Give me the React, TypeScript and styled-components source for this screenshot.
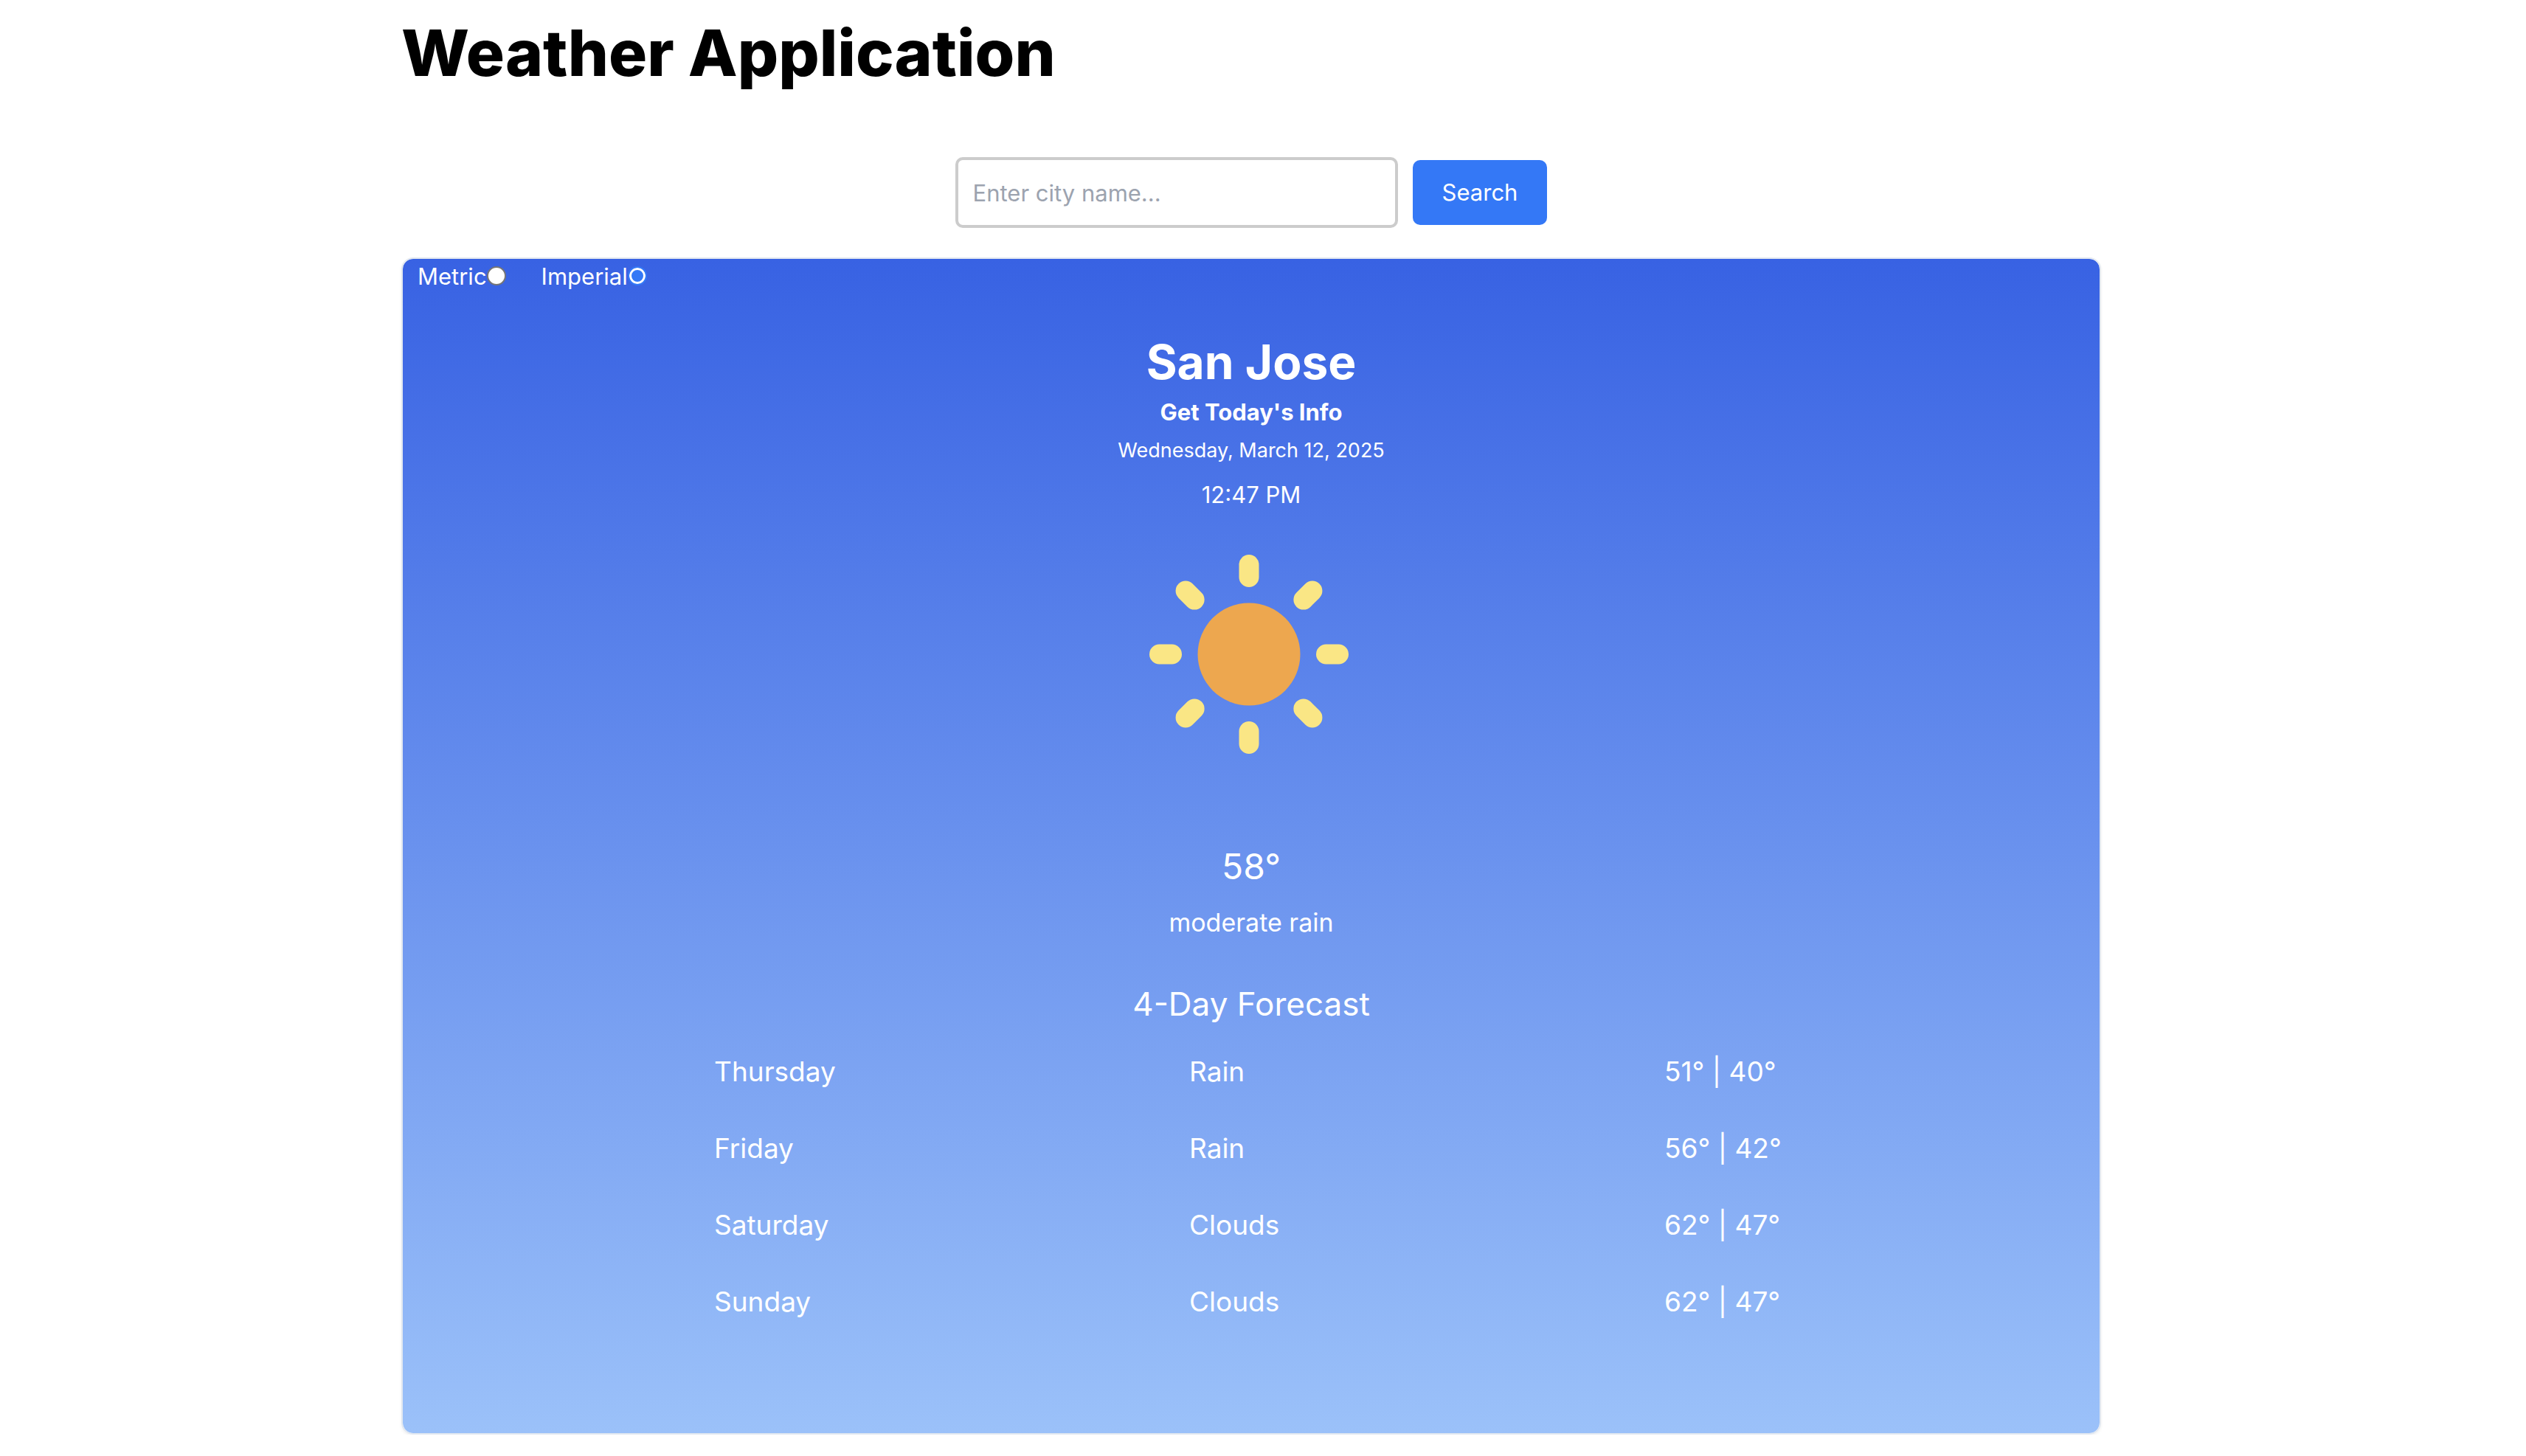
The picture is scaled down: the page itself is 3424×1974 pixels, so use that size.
import React, { useState } from 'react';
import styled, { createGlobalStyle } from 'styled-components';

const GlobalStyle = createGlobalStyle`
  *, *::before, *::after { box-sizing: border-box; }
  body {
    margin: 0;
    padding-right: 32px;
    background: #fff;
    color: #000;
    font-family: Inter, "Liberation Sans", sans-serif;
    font-size: 31px;
    line-height: 48px;
  }
  h1, h2, h3, p { margin: 0; }
`;

const Page = styled.main`
  max-width: 2304px;
  margin: 0 auto;
  padding-top: 24px;
`;

const Title = styled.h1`
  font-size: 87px;
  line-height: 96px;
  font-weight: 800;
`;

const SearchForm = styled.form`
  display: flex;
  justify-content: center;
  align-items: center;
  gap: 20px;
  margin: 93px 0 40px;
`;

const CityInput = styled.input`
  width: 600px;
  height: 96px;
  padding: 0 20px;
  border: 4px solid #ccc;
  border-radius: 10px;
  background: #fff;
  color: #000;
  font: inherit;

  &::placeholder {
    color: #9ca3af;
    opacity: 1;
  }
`;

const SearchButton = styled.button`
  height: 88px;
  padding: 0 40px;
  border: 0;
  border-radius: 10px;
  background: #3478f6;
  color: #fff;
  font: inherit;
  cursor: pointer;
`;

const Card = styled.section`
  padding-bottom: 126px;
  border: 2px solid #e2e8f0;
  border-radius: 16px;
  box-shadow: 0 2px 4px rgba(0, 0, 0, 0.06);
  background: linear-gradient(to bottom, #3862e3, #9bc1f9) padding-box;
  color: #fff;
`;

const Units = styled.div`
  display: flex;
  gap: 48px;
  padding: 0 20px;
`;

const UnitLabel = styled.label`
  display: flex;
  align-items: center;
`;

const UnitRadio = styled.input`
  appearance: none;
  width: 26px;
  height: 26px;
  margin: 0 0 2px;
  border: 2px solid #767676;
  border-radius: 50%;
  background: #fff;

  &:checked {
    border-color: #3478f6;
    background: #3478f6;
    box-shadow: inset 0 0 0 3px #fff;
  }
`;

const Current = styled.div`
  display: flex;
  flex-direction: column;
  align-items: center;
  padding-top: 48px;
`;

const City = styled.h2`
  font-size: 64px;
  line-height: 88px;
  font-weight: 700;
`;

const Subtitle = styled.p`
  font-size: 31px;
  font-weight: 700;
`;

const DateLine = styled.p`
  margin: 8px 0 16px;
  font-size: 27px;
  line-height: 40px;
`;

const SunIcon = styled.svg`
  display: block;
  width: 320px;
  height: 320px;
  margin: 32px 0 96px;
`;

const Temperature = styled.p`
  font-size: 48px;
  line-height: 64px;
`;

const Condition = styled.p`
  margin: 16px 0 48px;
  font-size: 34px;
  line-height: 56px;
`;

const ForecastTitle = styled.h3`
  margin-bottom: 6px;
  font-size: 44px;
  line-height: 68px;
  font-weight: 400;
`;

const ForecastTable = styled.table`
  width: calc(50% + 728px);
  margin-left: auto;
  border-collapse: collapse;
  table-layout: fixed;
  font-size: 37px;
  line-height: 56px;
`;

const Cell = styled.td`
  height: 104px;
  padding: 0;
  font-weight: 400;
  text-align: left;

  &:not(:last-child) {
    width: 644px;
  }
`;

const days = [
  { day: 'Thursday', sky: 'Rain', high: 51, low: 40 },
  { day: 'Friday', sky: 'Rain', high: 56, low: 42 },
  { day: 'Saturday', sky: 'Clouds', high: 62, low: 47 },
  { day: 'Sunday', sky: 'Clouds', high: 62, low: 47 },
];

const units = ['Metric', 'Imperial'];
const rayAngles = [0, 45, 90, 135, 180, 225, 270, 315];

function Sun() {
  return (
    <SunIcon viewBox="-157 -160 320 320" aria-hidden="true">
      <circle r="69.5" fill="#eda74f" />
      {rayAngles.map((angle) => (
        <line
          key={angle}
          y1="-121.5"
          y2="-104.5"
          stroke="#fae685"
          strokeWidth="27"
          strokeLinecap="round"
          transform={`rotate(${angle})`}
        />
      ))}
    </SunIcon>
  );
}

export default function App() {
  const [unit, setUnit] = useState('Imperial');
  const [city, setCity] = useState('');

  return (
    <>
      <GlobalStyle />
      <Page>
        <Title>Weather Application</Title>
        <SearchForm onSubmit={(e) => e.preventDefault()}>
          <CityInput
            type="text"
            aria-label="City name"
            placeholder="Enter city name..."
            value={city}
            onChange={(e) => setCity(e.target.value)}
          />
          <SearchButton type="submit">Search</SearchButton>
        </SearchForm>
        <Card>
          <Units>
            {units.map((name) => (
              <UnitLabel key={name}>
                {name}
                <UnitRadio
                  type="radio"
                  name="unit"
                  checked={unit === name}
                  onChange={() => setUnit(name)}
                />
              </UnitLabel>
            ))}
          </Units>
          <Current>
            <City>San Jose</City>
            <Subtitle>Get Today's Info</Subtitle>
            <DateLine>Wednesday, March 12, 2025</DateLine>
            <p>12:47 PM</p>
            <Sun />
            <Temperature>58°</Temperature>
            <Condition>moderate rain</Condition>
            <ForecastTitle>4-Day Forecast</ForecastTitle>
          </Current>
          <ForecastTable>
            <tbody>
              {days.map(({ day, sky, high, low }) => (
                <tr key={day}>
                  <Cell as="th" scope="row">{day}</Cell>
                  <Cell>{sky}</Cell>
                  <Cell>{high}° | {low}°</Cell>
                </tr>
              ))}
            </tbody>
          </ForecastTable>
        </Card>
      </Page>
    </>
  );
}
